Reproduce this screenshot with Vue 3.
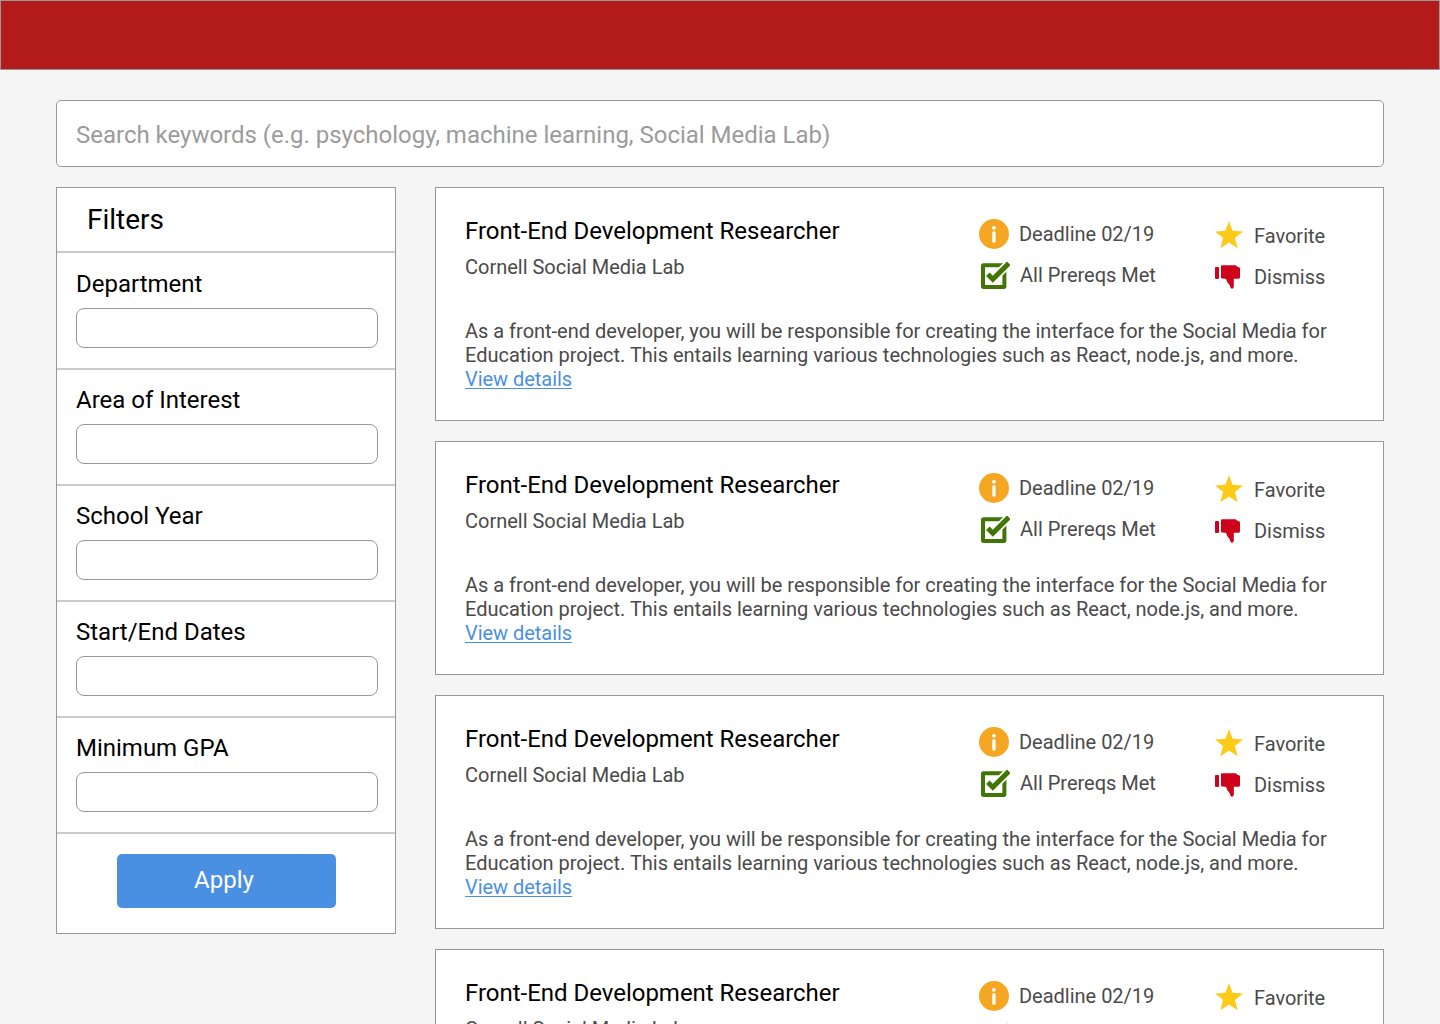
<script setup>
const filters = ['Department', 'Area of Interest', 'School Year', 'Start/End Dates', 'Minimum GPA']

const listings = Array.from({ length: 4 }, (_, id) => ({
  id,
  title: 'Front-End Development Researcher',
  lab: 'Cornell Social Media Lab',
  deadline: '02/19',
  description:
    'As a front-end developer, you will be responsible for creating the interface for the Social Media for Education project. This entails learning various technologies such as React, node.js, and more.'
}))
</script>

<template>
  <div class="page">
    <header class="banner"></header>
    <main class="content">
      <input class="search" type="text" placeholder="Search keywords (e.g. psychology, machine learning, Social Media Lab)" />
      <div class="columns">
        <aside class="sidebar">
          <h1 class="sidebar-title">Filters</h1>
          <label v-for="name in filters" :key="name" class="filter">
            <span class="filter-name">{{ name }}</span>
            <input class="filter-input" type="text" />
          </label>
          <div class="apply-row">
            <button class="apply" type="button">Apply</button>
          </div>
        </aside>
        <section class="results">
          <article v-for="item in listings" :key="item.id" class="card">
            <div class="card-head">
              <div class="heading">
                <h2 class="title">{{ item.title }}</h2>
                <p class="lab">{{ item.lab }}</p>
              </div>
              <div class="facts">
                <div class="row">
                  <svg class="icon-info" width="30" height="30" viewBox="0 0 30 30">
                    <circle cx="15" cy="15" r="15" fill="#f5a623" />
                    <circle cx="14.9" cy="8.8" r="1.9" fill="#fff" />
                    <rect x="13.3" y="12.2" width="3.3" height="11.5" rx="1.4" fill="#fff" />
                  </svg>
                  <span>Deadline {{ item.deadline }}</span>
                </div>
                <div class="row prereqs">
                  <svg class="icon-check" width="31" height="30" viewBox="0 0 31 30">
                    <rect x="4" y="5.3" width="21.4" height="21.6" rx=".6" fill="none" stroke="#417505" stroke-width="4" />
                    <path d="M13.8 19.3L32 1.1" fill="none" stroke="#fff" stroke-width="8.4" />
                    <path d="M8.8 14.3L13.8 19.3L29.8 3.3" fill="none" stroke="#417505" stroke-width="5" />
                  </svg>
                  <span>All Prereqs Met</span>
                </div>
              </div>
              <div class="actions">
                <div class="row">
                  <svg class="icon-star" width="28" height="30" viewBox="0 0 28 30">
                    <path d="M14 .3L17.6 9.8L28 10.4L19.9 17L22.7 27.2L14 21.6L5.3 27.2L8.1 17L0 10.4L10.4 9.8Z" fill="#fdca17" />
                  </svg>
                  <span>Favorite</span>
                </div>
                <div class="row dismiss">
                  <svg class="icon-thumb" width="26" height="26" viewBox="0 0 26 26">
                    <path d="M1 3H3Q4 3 4 4V14Q4 15 3 15H1Q0 15 0 14V4Q0 3 1 3Z" fill="#d0021b" />
                    <path d="M7 1.3H20.8L22.3 2.7L24 3.2Q25 3.4 25 4.4V13.3Q25 14.7 23.7 14.7H18.8V22.4Q18.6 24.7 17 24.7Q15.8 24.7 15.2 23L14.8 21.3L12.2 18Q11.8 15 10.4 14.8L7 14.4Q6 14.2 6 13.2V2.3Q6 1.3 7 1.3Z" fill="#d0021b" />
                  </svg>
                  <span>Dismiss</span>
                </div>
              </div>
            </div>
            <p class="description">{{ item.description }}</p>
            <a class="details">View details</a>
          </article>
        </section>
      </div>
    </main>
  </div>
</template>

<style>
body {
  margin: 0;
  background: #f5f5f5;
}
</style>

<style scoped>
.page {
  height: 1024px;
  overflow: hidden;
  background: #f5f5f5;
  color: #000;
  font-family: Roboto, sans-serif;
  letter-spacing: -0.01px;
}
.page * {
  box-sizing: border-box;
}
h1,
h2,
p {
  margin: 0;
  font-weight: 400;
}
.banner {
  box-sizing: border-box;
  height: 70px;
  background: #b31b1b;
  border: 1px solid #979797;
}
.content {
  padding: 30px 56px 0;
}
.search {
  display: block;
  width: 100%;
  height: 67px;
  padding: 2px 19px 0;
  border: 1px solid #979797;
  border-radius: 5px;
  background: #fff;
  font: 24px/28px Roboto, sans-serif;
  letter-spacing: -0.015px;
}
.search::placeholder {
  color: #9b9b9b;
}
.columns {
  display: flex;
  align-items: flex-start;
  gap: 39px;
  margin-top: 20px;
}
.sidebar {
  width: 340px;
  height: 747px;
  border: 1px solid #979797;
  background: #fff;
}
.sidebar-title {
  height: 63px;
  padding: 15px 30px 0;
  font-size: 28px;
  line-height: 33px;
}
.filter {
  display: block;
  height: 116px;
  padding: 16px 17px 0 19px;
  border-top: 2px solid #cacaca;
}
.filter:first-of-type {
  height: 117px;
  padding-top: 17px;
}
.filter-name {
  display: block;
  font-size: 24px;
  line-height: 28px;
}
.filter-input {
  display: block;
  width: 302px;
  height: 40px;
  margin-top: 10px;
  border: 1px solid #979797;
  border-radius: 8px;
  background: #fff;
}
.apply-row {
  padding: 20px 60px 0;
  border-top: 2px solid #cacaca;
}
.apply {
  display: block;
  width: 219px;
  height: 54px;
  padding: 0 5px 2px 0;
  border: 0;
  border-radius: 5px;
  background: #4a90e2;
  color: #fff;
  font: 24px/28px Roboto, sans-serif;
}
.results {
  flex: 1;
  display: flex;
  flex-direction: column;
  gap: 20px;
}
.card {
  height: 234px;
  padding: 29px;
  border: 1px solid #979797;
  background: #fff;
  color: #4a4a4a;
  font-size: 20px;
  line-height: 24px;
}
.card-head {
  display: flex;
  height: 102px;
}
.heading {
  width: 514px;
}
.title {
  color: #000;
  font-size: 24px;
  line-height: 28px;
  letter-spacing: -0.02px;
}
.lab {
  margin-top: 10px;
}
.facts {
  width: 236px;
  padding-top: 2px;
}
.row {
  display: flex;
  align-items: center;
  height: 30px;
  gap: 10px;
}
.prereqs {
  margin-top: 11px;
}
.actions {
  padding-top: 4px;
}
.actions .row {
  gap: 11px;
}
.icon-thumb {
  margin-right: 2px;
}
.dismiss {
  margin-top: 11px;
}
.details {
  color: #4a90e2;
  letter-spacing: -0.04px;
  text-decoration: underline;
  text-decoration-thickness: 1px;
  text-underline-offset: 2px;
  text-decoration-skip-ink: none;
}
</style>
